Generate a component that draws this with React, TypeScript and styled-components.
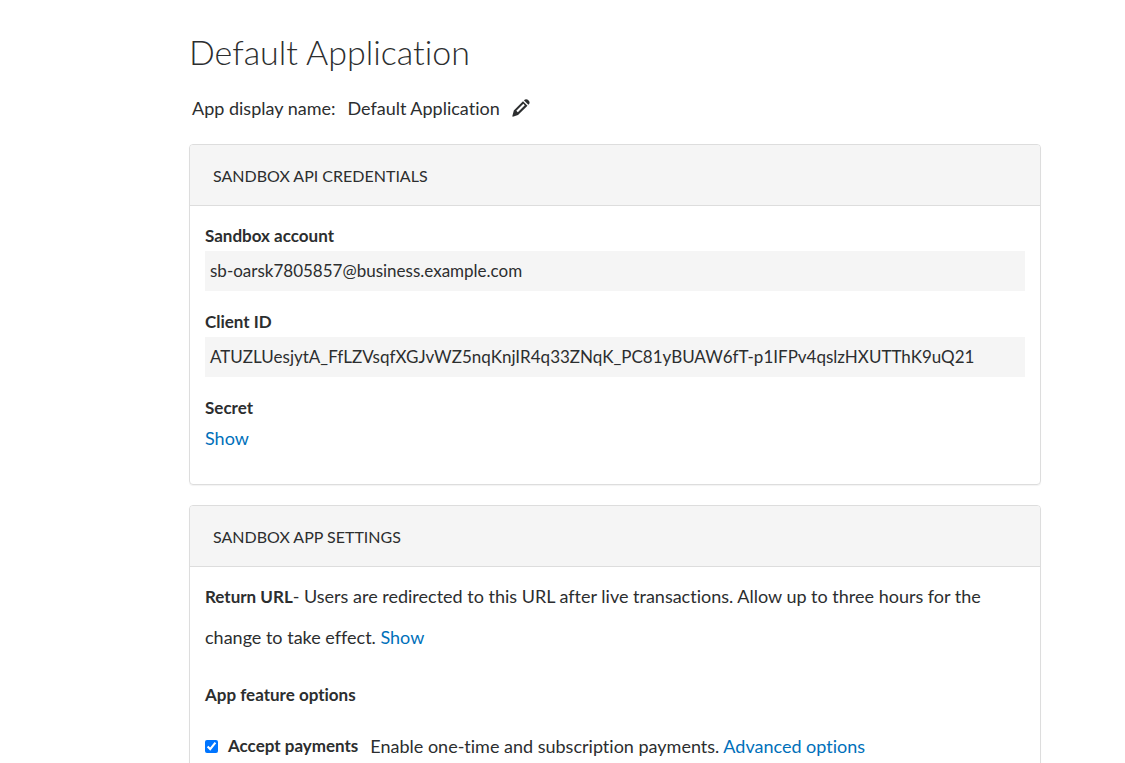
import { useState } from "react";
import styled, { createGlobalStyle } from "styled-components";

const GlobalStyle = createGlobalStyle`
  *, *::before, *::after { box-sizing: border-box; }
  body {
    margin: 0;
    background: #fff;
    color: #2c2e2f;
    font-family: Lato, "Liberation Sans", sans-serif;
    font-size: 18px;
    font-variant-ligatures: none;
    line-height: 30px;
  }
`;

const Page = styled.main`
  padding: 27px 84px 40px 189px;
`;

const Title = styled.h1`
  margin: 0;
  font-size: 34px;
  font-weight: 300;
  line-height: 50px;
`;

const NameRow = styled.div`
  display: flex;
  align-items: center;
  gap: 12px;
  margin: 16px 0 21px;
  padding-left: 3px;
`;

const EditButton = styled.button`
  display: flex;
  padding: 0;
  border: 0;
  background: none;
  color: #2c2e2f;
  cursor: pointer;
`;

const Card = styled.section`
  margin-bottom: 20px;
  border: 1px solid #ddd;
  border-radius: 4px;
  box-shadow: 0 1px 1px rgba(0, 0, 0, 0.05);
`;

const CardTitle = styled.h2`
  margin: 0;
  padding: 16px 23px 14px;
  border-bottom: 1px solid #ddd;
  border-radius: 3px 3px 0 0;
  background: #f5f5f5;
  font-size: 16px;
  font-weight: 400;
  line-height: 30px;
  text-transform: uppercase;
`;

const CardBody = styled.div<{ $top: number }>`
  padding: ${(p) => p.$top}px 15px 15px;
`;

const Field = styled.div`
  margin-bottom: 16px;
`;

const FieldLabel = styled.div`
  font-size: 17px;
  font-weight: 700;
`;

const FieldValue = styled.div`
  padding: 5px;
  background: #f5f5f5;
  font-size: 17px;
  overflow-wrap: anywhere;
`;

const Link = styled.a`
  color: #0070ba;
  text-decoration: none;
  &:hover { text-decoration: underline; }
`;

const Paragraph = styled.p`
  margin: 0 0 18px;
  line-height: 40px;
`;

const Strong = styled.strong`
  font-size: 17px;
`;

const SubTitle = styled.h3`
  margin: 0 0 11px;
  font-size: 17px;
  font-weight: 700;
  line-height: 40px;
`;

const Option = styled.div`
  display: flex;
  align-items: center;
  flex-wrap: wrap;
  line-height: 40px;
`;

const OptionLabel = styled.label`
  display: flex;
  align-items: center;
  gap: 10px;
  margin-right: 12px;
  font-size: 17px;
  font-weight: 700;
`;

const Checkbox = styled.input`
  width: 13px;
  height: 13px;
  margin: 0;
`;

const PencilIcon = () => (
  <svg width="18" height="18" viewBox="0 0 18 18" aria-hidden="true">
    <path
      fill="currentColor"
      fillRule="evenodd"
      d="M11 2.2 15.5 6.7 6 16 .8 17.7.3 17.2 1.8 11.4ZM11.3 4.8 4.3 11.8 5.8 13.3 12.8 6.3Z"
    />
    <path fill="currentColor" d="M11.9 1.3 13.1.4Q14.6-.2 15.9.8L17 2Q18 3.3 17.3 4.7L16.4 5.8Z" />
  </svg>
);

export default function App() {
  const [accept, setAccept] = useState(true);
  return (
    <>
      <GlobalStyle />
      <Page>
        <Title>Default Application</Title>
        <NameRow>
          <span>App display name:</span>
          <span>Default Application</span>
          <EditButton type="button" aria-label="Edit app display name">
            <PencilIcon />
          </EditButton>
        </NameRow>

        <Card>
          <CardTitle>Sandbox API credentials</CardTitle>
          <CardBody $top={15}>
            <Field>
              <FieldLabel>Sandbox account</FieldLabel>
              <FieldValue>sb-oarsk7805857@business.example.com</FieldValue>
            </Field>
            <Field>
              <FieldLabel>Client ID</FieldLabel>
              <FieldValue>
                ATUZLUesjytA_FfLZVsqfXGJvWZ5nqKnjIR4q33ZNqK_PC81yBUAW6fT-p1IFPv4qslzHXUTThK9uQ21
              </FieldValue>
            </Field>
            <Field>
              <FieldLabel>Secret</FieldLabel>
              <Link href="#secret">Show</Link>
            </Field>
          </CardBody>
        </Card>

        <Card>
          <CardTitle>Sandbox app settings</CardTitle>
          <CardBody $top={9}>
            <Paragraph>
              <Strong>Return URL</Strong>- Users are redirected to this URL after live transactions. Allow up to
              three hours for the change to take effect. <Link href="#return-url">Show</Link>
            </Paragraph>
            <SubTitle>App feature options</SubTitle>
            <Option>
              <OptionLabel>
                <Checkbox type="checkbox" checked={accept} onChange={(e) => setAccept(e.target.checked)} />
                Accept payments
              </OptionLabel>
              <span>
                Enable one-time and subscription payments. <Link href="#advanced">Advanced options</Link>
              </span>
            </Option>
          </CardBody>
        </Card>
      </Page>
    </>
  );
}
